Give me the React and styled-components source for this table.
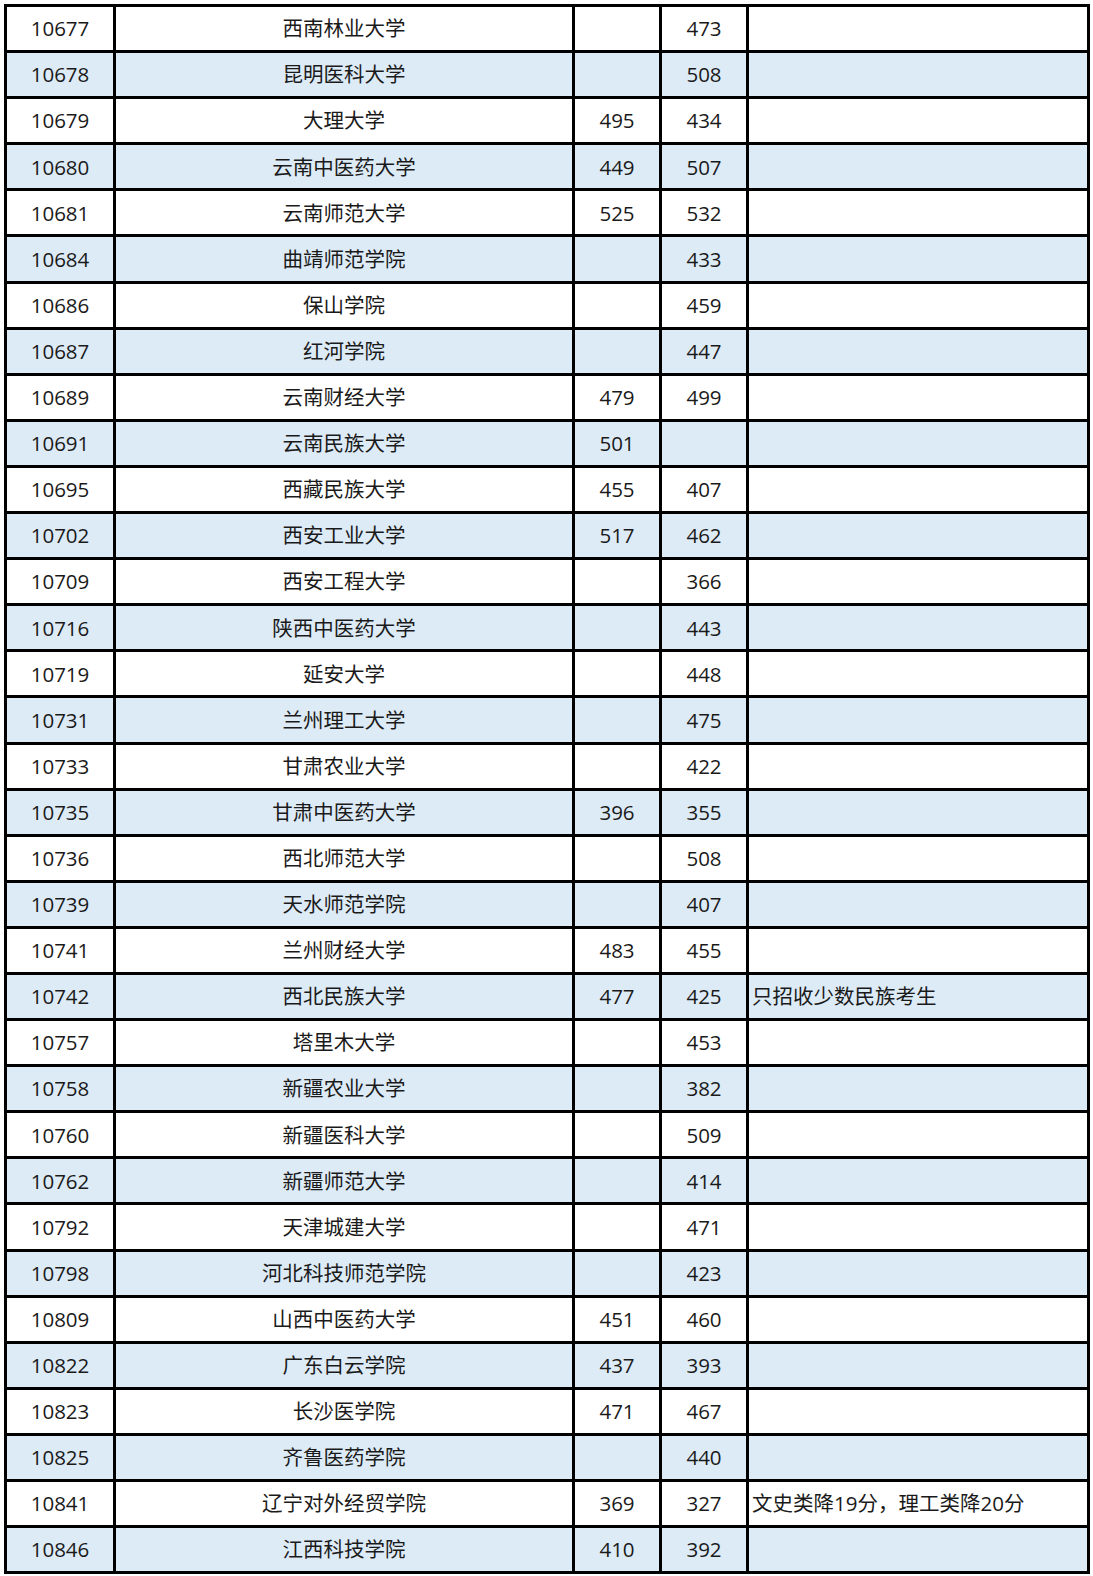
import styled, { createGlobalStyle } from 'styled-components';

const rows = [
  ['10677', '西南林业大学', '', '473', ''],
  ['10678', '昆明医科大学', '', '508', ''],
  ['10679', '大理大学', '495', '434', ''],
  ['10680', '云南中医药大学', '449', '507', ''],
  ['10681', '云南师范大学', '525', '532', ''],
  ['10684', '曲靖师范学院', '', '433', ''],
  ['10686', '保山学院', '', '459', ''],
  ['10687', '红河学院', '', '447', ''],
  ['10689', '云南财经大学', '479', '499', ''],
  ['10691', '云南民族大学', '501', '', ''],
  ['10695', '西藏民族大学', '455', '407', ''],
  ['10702', '西安工业大学', '517', '462', ''],
  ['10709', '西安工程大学', '', '366', ''],
  ['10716', '陕西中医药大学', '', '443', ''],
  ['10719', '延安大学', '', '448', ''],
  ['10731', '兰州理工大学', '', '475', ''],
  ['10733', '甘肃农业大学', '', '422', ''],
  ['10735', '甘肃中医药大学', '396', '355', ''],
  ['10736', '西北师范大学', '', '508', ''],
  ['10739', '天水师范学院', '', '407', ''],
  ['10741', '兰州财经大学', '483', '455', ''],
  ['10742', '西北民族大学', '477', '425', '只招收少数民族考生'],
  ['10757', '塔里木大学', '', '453', ''],
  ['10758', '新疆农业大学', '', '382', ''],
  ['10760', '新疆医科大学', '', '509', ''],
  ['10762', '新疆师范大学', '', '414', ''],
  ['10792', '天津城建大学', '', '471', ''],
  ['10798', '河北科技师范学院', '', '423', ''],
  ['10809', '山西中医药大学', '451', '460', ''],
  ['10822', '广东白云学院', '437', '393', ''],
  ['10823', '长沙医学院', '471', '467', ''],
  ['10825', '齐鲁医药学院', '', '440', ''],
  ['10841', '辽宁对外经贸学院', '369', '327', '文史类降19分，理工类降20分'],
  ['10846', '江西科技学院', '410', '392', ''],
];

const GlobalStyle = createGlobalStyle`
  body {
    margin: 0;
    background: #fff;
    font-family: "Open Sans", "Noto Sans CJK SC", sans-serif;
  }
`;

const Page = styled.div`
  padding: 4px 0 0 4px;
`;

const Table = styled.table`
  border-collapse: collapse;
  table-layout: fixed;
  width: 1083px;
  color: #1a1a1a;
  font-size: 20.5px;
`;

const Row = styled.tr`
  height: 46.1px;
  background: ${(p) => (p.$shaded ? '#ddebf7' : '#fff')};
`;

const Cell = styled.td`
  border: 3px solid #000;
  padding: 0 ${(p) => (p.$left ? '3px' : '0')};
  text-align: ${(p) => (p.$left ? 'left' : 'center')};
  vertical-align: middle;
  white-space: nowrap;
  line-height: 1;
`;

const widths = [109, 459, 87, 87, 341];

export default function App() {
  return (
    <Page>
      <GlobalStyle />
      <Table>
        <colgroup>
          {widths.map((w, i) => (
            <col key={i} style={{ width: w }} />
          ))}
        </colgroup>
        <tbody>
          {rows.map((r, i) => (
            <Row key={r[0]} $shaded={i % 2 === 1}>
              {r.map((v, j) => (
                <Cell key={j} $left={j === 4}>
                  {v}
                </Cell>
              ))}
            </Row>
          ))}
        </tbody>
      </Table>
    </Page>
  );
}
